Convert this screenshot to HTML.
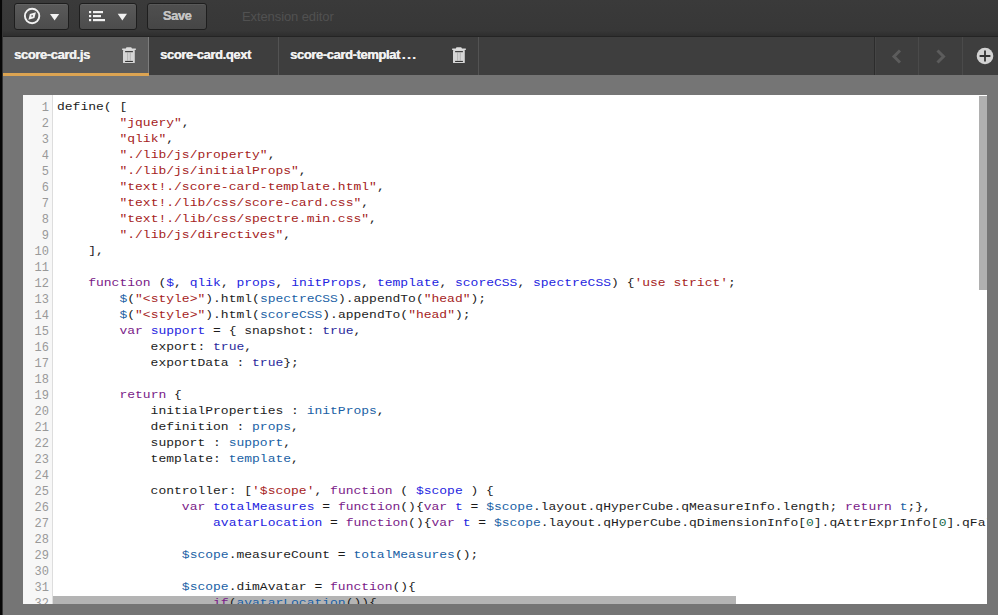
<!DOCTYPE html>
<html><head><meta charset="utf-8">
<style>
*{box-sizing:border-box;margin:0;padding:0}
html,body{width:998px;height:615px;overflow:hidden;background:#757575;position:relative;font-family:"Liberation Sans",sans-serif}
.abs{position:absolute}
#leftstrip{left:0;top:0;width:3px;height:615px;background:linear-gradient(to right,#070707 0,#070707 2px,#353535 2px);z-index:10}
#topbar{left:0;top:0;width:998px;height:37px;background:linear-gradient(#3a3a3a,#373737 85%,#2e2e2e);border-bottom:1px solid #242424}
.btn{position:absolute;top:3px;height:27px;border-radius:3px;background:linear-gradient(#5a5a5a,#4c4c4c);border:1px solid #1e1e1e;box-shadow:inset 0 1px 0 rgba(255,255,255,0.06)}
#b1{left:14px;width:55px}
#b2{left:79px;width:58px}
#b3{left:147px;width:60px;background:linear-gradient(#4f4f4f,#464646);color:#c4c4c4;text-shadow:0.3px 0 0 #c4c4c4;font-weight:bold;font-size:13px;line-height:24px;text-align:center;letter-spacing:-0.5px}
#title{left:242px;top:9px;font-size:13px;color:#515151;letter-spacing:-0.1px}
#tabbar{left:0;top:37px;width:998px;height:38px;background:#3e3e3e}
.tab{position:absolute;top:0;height:38px;border-right:1px solid #535353;color:#f0f0f0;font-weight:bold;font-size:13px;letter-spacing:-0.4px}
.tab span{position:absolute;left:12px;top:10px;text-shadow:0.35px 0 0 #f0f0f0}
#t1{left:2px;width:147px;background:#5b5b5b;border-right:1px solid #7c7c7c}
#t1:after{content:"";position:absolute;left:0;right:-1px;bottom:-1px;height:3px;background:#dca452;z-index:3}
#t2{left:149px;width:130px}
#t3{left:279px;width:200px}
.trash{position:absolute;width:14px;height:17px}
#editor{left:23px;top:95px;width:964px;height:509px;background:#fff;overflow:hidden}
#gutter{left:0;top:0;width:30px;height:509px;background:#f7f7f7;border-right:1px solid #ddd}
.code{position:absolute;z-index:2;left:34px;top:5px;font-family:"Liberation Mono",monospace;font-size:13px;line-height:20px;transform:scaleY(0.8);transform-origin:0 0;white-space:pre;color:#1c1c1c}
.ln{position:absolute;left:0;top:4.5px;width:26px;text-align:right;font-family:"Liberation Mono",monospace;font-size:12px;line-height:16px;white-space:pre;color:#999}
.k{color:#7a1a88}.d{color:#2424e0}.v{color:#1a5fa5}.s{color:#a52222}.a{color:#2a2a9c}.n{color:#1a6a4a}
#vthumb{left:956px;top:1px;width:8px;height:194px;background:#b0b0b0}
#hthumb{left:30px;top:501px;width:683px;height:8px;background:#b4b4b4;z-index:0}
</style></head><body>
<div id="leftstrip" class="abs"></div>
<div id="topbar" class="abs">
  <div class="btn" id="b1">
    <svg class="abs" style="left:0;top:0" width="55" height="26" viewBox="0 0 55 26">
      <circle cx="17.1" cy="12" r="7.2" fill="none" stroke="#f2f2f2" stroke-width="1.9"/>
      <path d="M20.9 8.2 L19.4 14 L13.4 15.7 L14.9 9.9 Z" fill="#f2f2f2"/>
      <circle cx="17.15" cy="11.95" r="0.9" fill="#6a6a6a"/>
      <path d="M35 10 L44.2 10 L39.6 16.4 Z" fill="#f2f2f2"/>
    </svg>
  </div>
  <div class="btn" id="b2">
    <svg class="abs" style="left:0;top:0" width="58" height="26" viewBox="0 0 58 26">
      <rect x="9" y="7" width="2.2" height="2.2" fill="#f2f2f2"/>
      <rect x="9" y="11" width="2.2" height="2.2" fill="#f2f2f2"/>
      <rect x="9" y="15" width="2.2" height="2.2" fill="#f2f2f2"/>
      <rect x="13" y="7" width="10" height="2.2" fill="#f2f2f2"/>
      <rect x="13" y="11" width="8" height="2.2" fill="#f2f2f2"/>
      <rect x="13" y="15" width="12" height="2.2" fill="#f2f2f2"/>
      <path d="M37.7 9.8 L47 9.8 L42.35 16.4 Z" fill="#f2f2f2"/>
    </svg>
  </div>
  <div class="btn" id="b3">Save</div>
  <div id="title" class="abs">Extension editor</div>
</div>
<div id="tabbar" class="abs">
  <div class="tab" id="t1"><span style="left:12px">score-card.js</span>
    <svg class="trash" style="left:120px;top:10px" viewBox="0 0 14 17"><path d="M4.5 0.3 H9.2 L10 1.5 H13.6 Q14 1.6 14 2.4 L13.4 3 H0.6 L0 2.4 Q0 1.6 0.6 1.5 H3.8 Z" fill="#dcdcdc"/><rect x="1" y="3" width="11.8" height="13" rx="0.6" fill="#d6d6d6"/><rect x="3.1" y="4.1" width="7.8" height="1.1" fill="#333"/><rect x="3.1" y="13.9" width="7.8" height="1.1" fill="#333"/><rect x="5.3" y="5" width="0.8" height="9" fill="#aaa"/><rect x="7.8" y="5" width="0.8" height="9" fill="#aaa"/></svg>
  </div>
  <div class="tab" id="t2"><span style="left:11px">score-card.qext</span></div>
  <div class="tab" id="t3"><span style="left:11px">score-card-templa<b style="letter-spacing:1.6px">t...</b></span>
    <svg class="trash" style="left:173px;top:10px" viewBox="0 0 14 17"><path d="M4.5 0.3 H9.2 L10 1.5 H13.6 Q14 1.6 14 2.4 L13.4 3 H0.6 L0 2.4 Q0 1.6 0.6 1.5 H3.8 Z" fill="#dcdcdc"/><rect x="1" y="3" width="11.8" height="13" rx="0.6" fill="#d6d6d6"/><rect x="3.1" y="4.1" width="7.8" height="1.1" fill="#333"/><rect x="3.1" y="13.9" width="7.8" height="1.1" fill="#333"/><rect x="5.3" y="5" width="0.8" height="9" fill="#aaa"/><rect x="7.8" y="5" width="0.8" height="9" fill="#aaa"/></svg>
  </div>
  <div class="abs" style="left:874px;top:0;width:1px;height:38px;background:#2c2c2c"></div>
  <div class="abs" style="left:875px;top:0;width:1px;height:38px;background:#454545"></div>
  <div class="abs" style="left:918px;top:0;width:1px;height:38px;background:#4a4a4a"></div>
  <div class="abs" style="left:962px;top:0;width:1px;height:38px;background:#4a4a4a"></div>
  <svg class="abs" style="left:870px;top:0" width="128" height="38" viewBox="0 0 128 38">
    <path d="M30 13.5 L24 19.5 L30 25.5" fill="none" stroke="#5c5c5c" stroke-width="3"/>
    <path d="M67.5 13.5 L73.5 19.5 L67.5 25.5" fill="none" stroke="#5c5c5c" stroke-width="3"/>
    <circle cx="115" cy="19" r="8.3" fill="#d2d2d2"/>
    <path d="M109.6 19 H120.4 M115 13.6 V24.4" stroke="#333" stroke-width="1.8"/>
  </svg>
</div>
<div id="editor" class="abs">
  <div id="gutter" class="abs"></div>
  <div class="ln">1
2
3
4
5
6
7
8
9
10
11
12
13
14
15
16
17
18
19
20
21
22
23
24
25
26
27
28
29
30
31
32</div>
  <div class="code">define( [
        <span class="s">"jquery"</span>,
        <span class="s">"qlik"</span>,
        <span class="s">"./lib/js/property"</span>,
        <span class="s">"./lib/js/initialProps"</span>,
        <span class="s">"text!./score-card-template.html"</span>,
        <span class="s">"text!./lib/css/score-card.css"</span>,
        <span class="s">"text!./lib/css/spectre.min.css"</span>,
        <span class="s">"./lib/js/directives"</span>,
    ],
 
    <span class="k">function</span> (<span class="d">$</span>, <span class="d">qlik</span>, <span class="d">props</span>, <span class="d">initProps</span>, <span class="d">template</span>, <span class="d">scoreCSS</span>, <span class="d">spectreCSS</span>) {<span class="s">'use strict'</span>;
        <span class="v">$</span>(<span class="s">"&lt;style&gt;"</span>).html(<span class="v">spectreCSS</span>).appendTo(<span class="s">"head"</span>);
        <span class="v">$</span>(<span class="s">"&lt;style&gt;"</span>).html(<span class="v">scoreCSS</span>).appendTo(<span class="s">"head"</span>);
        <span class="k">var</span> <span class="d">support</span> = { snapshot: <span class="a">true</span>,
            export: <span class="a">true</span>,
            exportData : <span class="a">true</span>};
 
        <span class="k">return</span> {
            initialProperties : <span class="v">initProps</span>,
            definition : <span class="v">props</span>,
            support : <span class="v">support</span>,
            template: <span class="v">template</span>,
 
            controller: [<span class="s">'$scope'</span>, <span class="k">function</span> ( <span class="d">$scope</span> ) {
                <span class="k">var</span> <span class="d">totalMeasures</span> = <span class="k">function</span>(){<span class="k">var</span> <span class="d">t</span> = <span class="v">$scope</span>.layout.qHyperCube.qMeasureInfo.length; <span class="k">return</span> <span class="v">t</span>;},
                    <span class="d">avatarLocation</span> = <span class="k">function</span>(){<span class="k">var</span> <span class="d">t</span> = <span class="v">$scope</span>.layout.qHyperCube.qDimensionInfo[<span class="n">0</span>].qAttrExprInfo[<span class="n">0</span>].qFallbackTitle;
 
                <span class="v">$scope</span>.measureCount = <span class="v">totalMeasures</span>();
 
                <span class="v">$scope</span>.dimAvatar = <span class="k">function</span>(){
                    <span class="k">if</span>(<span class="v">avatarLocation</span>()){</div>
  <div id="vthumb" class="abs"></div>
  <div id="hthumb" class="abs"></div>
</div>
</body></html>
